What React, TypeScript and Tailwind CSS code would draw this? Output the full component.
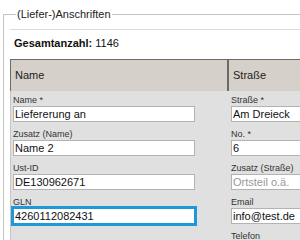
const leftFields = [
  { label: "Name *", value: "Liefererung an" },
  { label: "Zusatz (Name)", value: "Name 2" },
  { label: "Ust-ID", value: "DE130962671" },
  { label: "GLN", value: "4260112082431", focused: true },
];

const rightFields = [
  { label: "Straße *", value: "Am Dreieck" },
  { label: "No. *", value: "6" },
  { label: "Zusatz (Straße)", value: "", placeholder: "Ortsteil o.ä." },
  { label: "Email", value: "info@test.de" },
  { label: "Telefon", value: "" },
];

type Field = { label: string; value: string; placeholder?: string; focused?: boolean };

function FieldGroup({ field }: { field: Field }) {
  return (
    <div className="flex flex-col">
      <label className="text-[9px] leading-[12px] text-[#333]">{field.label}</label>
      <input
        readOnly
        value={field.value}
        placeholder={field.placeholder}
        className={
          field.focused
            ? "h-[16px] w-[182px] bg-white px-[1px] text-[11px] text-[#111] border border-[#1f97d8] outline-2 outline-solid outline-[#1f97d8] placeholder:text-[#999]"
            : "h-[16px] w-[182px] bg-white px-[1px] text-[11px] text-[#111] border border-[#b3b3b3] outline-none placeholder:text-[#999]"
        }
      />
    </div>
  );
}

export default function App() {
  return (
    <div className="w-[300px] h-[240px] overflow-hidden bg-white font-['Liberation_Sans',Arial,sans-serif]">
      <fieldset className="ml-[3px] mt-[7px] w-[560px] border border-[#c4c4c4] pl-[6px] pt-[8px] h-[260px]">
        <legend className="ml-[6px] px-[1px] text-[11px] leading-[14px] text-[#222]">(Liefer-)Anschriften</legend>

        <div className="border-t border-[#dcdcdc]">
          <div className="pl-[4px] pt-[7px] pb-[9px] text-[11px] leading-[13px] text-[#111]">
            <span className="font-bold">Gesamtanzahl:</span> 1146
          </div>

          {/* table header */}
          <div className="flex h-[32px] border-t border-[#6a6a6a] bg-[#d5d1ca] text-[11px] text-[#222]">
            <div className="w-[219px] border-l border-r-2 border-[#6a6a6a] pl-[4px] flex items-center">Name</div>
            <div className="pl-[4px] flex items-center">Straße</div>
          </div>

          {/* body */}
          <div className="flex border-l border-[#c6c6c6] bg-[#e0e0e0] pt-[3px] h-[160px]">
            <div className="w-[218px] pl-[2px] flex flex-col gap-[6px]">
              {leftFields.map((f) => (
                <FieldGroup key={f.label} field={f} />
              ))}
            </div>
            <div className="pl-[2px] flex flex-col gap-[6px]">
              {rightFields.map((f) => (
                <FieldGroup key={f.label} field={f} />
              ))}
            </div>
          </div>
        </div>
      </fieldset>
    </div>
  );
}
